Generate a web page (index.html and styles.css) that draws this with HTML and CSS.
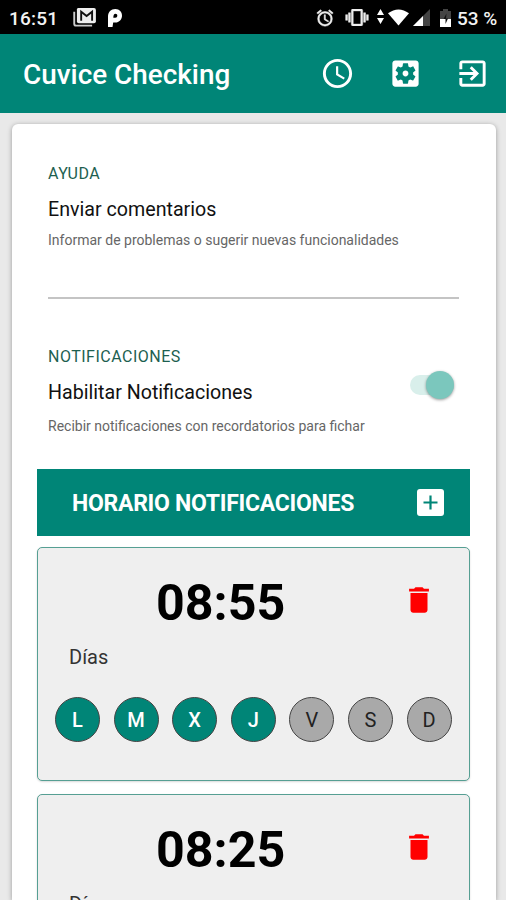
FILE: index.html
```html
<!DOCTYPE html>
<html lang="es">
<head>
<meta charset="utf-8">
<title>Cuvice Checking</title>
<link rel="stylesheet" href="styles.css">
</head>
<body>
<div class="screen">
  <div class="status">
    <span class="status-time">16:51</span>
    <svg class="s-mail" viewBox="0 0 24 20"><path d="M5 0h17a2 2 0 0 1 2 2v12a2 2 0 0 1-2 2H6a2 2 0 0 1-2-2V1z" fill="#eee"/><path d="M8.500 13.500V4l5.700 4.500L20 4v9.500" fill="none" stroke="#111" stroke-width="2"/><path d="M1.200 4v12.500a2 2 0 0 0 2 2H20" fill="none" stroke="#ccc" stroke-width="2"/></svg>
    <svg class="s-park" viewBox="0 0 14 18"><path fill="#fff" fill-rule="evenodd" d="M0 7.500C0 3 3 0 7.300 0S14 3 14 6.700s-2.700 6.800-6.700 6.800H5.200L4.500 18H0zM7.500 4.800C6 4.800 5.400 6 5.300 8.700h2c1.200 0 2-.8 2-2s-.7-1.900-1.800-1.900z"/></svg>
    <span class="spacer"></span>
    <svg class="s-alarm" viewBox="1 1 22 22"><path fill="#eee" stroke="#eee" stroke-width=".6" d="M22 5.720l-4.600-3.860-1.290 1.530 4.600 3.860L22 5.720zM7.880 3.390L6.600 1.860 2 5.710l1.290 1.530 4.590-3.850zM12.500 8H11v6l4.750 2.850.75-1.230-4-2.370V8zM12 4a9 9 0 1 0 0 18 9 9 0 0 0 0-18zm0 16a7 7 0 1 1 0-14 7 7 0 0 1 0 14z"/></svg>
    <svg class="s-vib" viewBox="0 3 24 18"><path fill="#eee" stroke="#eee" stroke-width=".5" d="M0 15h2V9H0v6zm3 2h2V7H3v10zm19-8v6h2V9h-2zm-3 8h2V7h-2v10zM16.500 3h-9C6.670 3 6 3.670 6 4.500v15c0 .83.67 1.500 1.500 1.500h9c.83 0 1.500-.67 1.500-1.500v-15c0-.83-.67-1.500-1.500-1.500zM16 19H8V5h8v14z"/></svg>
    <svg class="s-arrows" viewBox="0 0 7 15"><path fill="#fff" d="M3.500 0L7 6H0zM3.500 15L7 9H0z"/></svg>
    <svg class="s-wifi" viewBox="0 0 22 17"><path fill="#fff" d="M0 4Q11-4 22 4L11 17z"/></svg>
    <svg class="s-cell" viewBox="0 0 17 17"><path fill="#444" d="M0 17L17 0v17z"/><path fill="#fff" d="M0 17L10 7v10z"/></svg>
    <svg class="s-batt" viewBox="0 0 11 18"><path fill="#444" d="M3 0h5v2h3v8H0V2h3z"/><path fill="#fff" d="M0 10h11v8H0z"/><path d="M6.500 4.500L3.500 10h2v5L8 9.500H6z" fill="#111"/></svg>
    <span class="status-pct">53 %</span>
  </div>

  <header class="appbar">
    <h1 class="title">Cuvice Checking</h1>
    <svg class="icon" viewBox="0 0 24 24"><path d="M11.990 2C6.470 2 2 6.480 2 12s4.470 10 9.990 10C17.520 22 22 17.520 22 12S17.520 2 11.990 2zM12 20c-4.420 0-8-3.580-8-8s3.580-8 8-8 8 3.580 8 8-3.580 8-8 8zM12.500 7H11v6l5.250 3.150.75-1.230-4.500-2.670z"/></svg>
    <svg class="icon" viewBox="0 0 24 24"><path d="M12 10c-1.100 0-2 .9-2 2s.9 2 2 2 2-.9 2-2-.9-2-2-2zm7-7H5c-1.110 0-2 .9-2 2v14c0 1.100.89 2 2 2h14c1.110 0 2-.9 2-2V5c0-1.100-.89-2-2-2zm-1.750 9c0 .23-.02.46-.05.68l1.480 1.160c.13.11.17.3.08.45l-1.400 2.420c-.09.15-.27.21-.43.15l-1.740-.7c-.36.28-.76.51-1.180.69l-.26 1.850c-.03.170-.18.300-.35.300h-2.800c-.17 0-.32-.13-.35-.29l-.26-1.850c-.43-.18-.82-.41-1.180-.69l-1.740.7c-.16.06-.34 0-.43-.15l-1.400-2.420c-.09-.15-.05-.34.08-.45l1.480-1.160c-.03-.23-.05-.46-.05-.69 0-.23.02-.46.05-.68l-1.480-1.160c-.13-.11-.17-.3-.08-.45l1.400-2.420c.09-.15.27-.21.43-.15l1.740.7c.36-.28.76-.51 1.180-.69l.26-1.850c.03-.17.18-.3.35-.3h2.800c.17 0 .32.13.35.29l.26 1.850c.43.18.82.41 1.180.69l1.740-.7c.16-.06.34 0 .43.15l1.400 2.420c.09.15.05.34-.08.45l-1.480 1.160c.03.23.05.46.05.69z"/></svg>
    <svg class="icon" viewBox="0 0 24 24"><path d="M10.090 15.590L11.500 17l5-5-5-5-1.410 1.410L12.670 11H3v2h9.670l-2.580 2.590zM19 3H5c-1.110 0-2 .9-2 2v4h2V5h14v14H5v-4H3v4c0 1.100.89 2 2 2h14c1.100 0 2-.9 2-2V5c0-1.100-.9-2-2-2z"/></svg>
  </header>

  <main class="card">
    <section class="block">
      <div class="label">AYUDA</div>
      <div class="item">Enviar comentarios</div>
      <div class="hint">Informar de problemas o sugerir nuevas funcionalidades</div>
    </section>
    <section class="block notif">
      <div>
        <div class="label">NOTIFICACIONES</div>
        <div class="item">Habilitar Notificaciones</div>
        <div class="hint hint-enable">Recibir notificaciones con recordatorios para fichar</div>
      </div>
      <div class="toggle"><span class="thumb"></span></div>
    </section>

    <div class="banner">
      <span class="banner-text">HORARIO NOTIFICACIONES</span>
      <svg class="plus" viewBox="0 0 27 27"><rect width="27" height="27" rx="3" fill="#fff"/><path d="M13.500 6.500v14M6.500 13.500h14" stroke="#008577" stroke-width="2.200"/></svg>
    </div>

    <article class="slot">
      <div class="slot-head">
        <span class="time">08:55</span>
        <svg class="trash" viewBox="0 0 24 24"><path d="M6 19c0 1.100.9 2 2 2h8c1.100 0 2-.9 2-2V7H6v12zM19 4h-3.500l-1-1h-5l-1 1H5v2h14V4z"/></svg>
      </div>
      <div class="days-label">Días</div>
      <div class="days">
        <span class="day on">L</span><span class="day on">M</span><span class="day on">X</span><span class="day on">J</span><span class="day">V</span><span class="day">S</span><span class="day">D</span>
      </div>
    </article>

    <article class="slot">
      <div class="slot-head">
        <span class="time">08:25</span>
        <svg class="trash" viewBox="0 0 24 24"><path d="M6 19c0 1.100.9 2 2 2h8c1.100 0 2-.9 2-2V7H6v12zM19 4h-3.500l-1-1h-5l-1 1H5v2h14V4z"/></svg>
      </div>
      <div class="days-label">Días</div>
    </article>
  </main>
</div>
</body>
</html>
```

FILE: styles.css
```css
* { box-sizing: border-box; }
body { margin: 0; font-family: Roboto, "Liberation Sans", sans-serif; color: #111; }
svg { display: block; flex: none; }
.screen { width: 506px; height: 900px; overflow: hidden; background: #e9e9e9; display: flex; flex-direction: column; }

.status { flex: none; height: 34px; background: #000; color: #f2f2f2; display: flex; align-items: center; padding: 1px 8px 0 9px; font-size: 19px; font-weight: 500; white-space: nowrap; }
.status-time { width: 64px; letter-spacing: 0.2px; }
.s-mail { width: 23px; height: 19px; }
.s-park { width: 14px; height: 18px; margin-left: 12px; }
.spacer { flex: 1; }
.s-alarm { width: 18px; height: 18px; }
.s-vib { width: 24px; height: 17px; margin-left: 11px; }
.s-arrows { width: 7px; height: 15px; margin: 0 4px 3px 8px; }
.s-wifi { width: 21px; height: 17px; }
.s-cell { width: 17px; height: 17px; margin-left: 4px; }
.s-batt { width: 11px; height: 18px; margin-left: 10px; }
.status-pct { width: 41px; margin-left: 6px; }
.status-pct, .status-time { padding-top: 1px; }

.appbar { flex: none; height: 79px; background: #008577; display: flex; align-items: center; padding: 0 16px 0 23px; }
.title { margin: 3px auto 0 0; font-size: 27.900px; font-weight: 500; line-height: 36px; color: #fff; white-space: nowrap; }
.icon { width: 35px; height: 35px; fill: #fff; margin-left: 32.500px; }

.card { width: 484px; margin: 11px 0 0 12px; flex: 1; min-height: 0; overflow: hidden; background: #fff; border-radius: 6px 6px 0 0; box-shadow: 0 1px 5px rgba(0, 0, 0, 0.35); padding: 32px 26px 0 25px; }
.block { margin: 0 11px; border-bottom: 2px solid #c4c4c4; height: 143px; padding-top: 1px; white-space: nowrap; }
.label { font-size: 16px; line-height: 34px; letter-spacing: 0.500px; color: #1d5f50; }
.item { font-size: 19.650px; line-height: 38px; color: #111; }
.hint { font-size: 14px; line-height: 22px; color: #666; }
.notif { display: flex; justify-content: space-between; border: 0; height: 170px; padding-top: 41px; }
.hint-enable { line-height: 28px; }
.toggle { width: 44px; height: 20px; margin: 35px 5px 0 0; border-radius: 10px; background: #d9efeb; position: relative; }
.thumb { position: absolute; right: 0; top: -4px; width: 28px; height: 28px; border-radius: 50%; background: #7bc7bd; box-shadow: 0 1px 3px rgba(0, 0, 0, 0.4); }

.banner { height: 67px; background: #008577; display: flex; align-items: center; justify-content: space-between; padding: 0 26px 0 35px; color: #fff; font-size: 23px; letter-spacing: -0.280px; font-weight: 700; white-space: nowrap; }
.banner-text { padding-top: 2px; }
.plus { width: 27px; height: 27px; }

.slot { height: 234px; margin: 11px 0 13px; border: 1.500px solid #569f93; border-radius: 5px; background: #efefef; box-shadow: 0 1px 2px rgba(0, 0, 0, 0.15); }
.slot-head { display: flex; align-items: center; height: 108px; padding-left: 118px; }
.time { width: 246px; padding-top: 2px; font-size: 50.200px; font-weight: 700; line-height: 60px; color: #000; white-space: nowrap; }
.trash { width: 34px; height: 34px; margin-top: -5px; fill: #f00; }
.days-label { height: 41px; padding-left: 31px; margin-top: -19px; line-height: 40px; font-size: 20px; color: #333; }
.days { display: flex; gap: 13.600px; padding: 19px 0 0 17px; }
.day { width: 45px; height: 45px; flex: none; border: 1px solid #444; border-radius: 50%; display: flex; align-items: center; justify-content: center; padding-top: 1px; background: #a9a9a9; color: #222; font-size: 20px; }
.day.on { background: #008577; color: #fff; font-weight: 500; }
```
